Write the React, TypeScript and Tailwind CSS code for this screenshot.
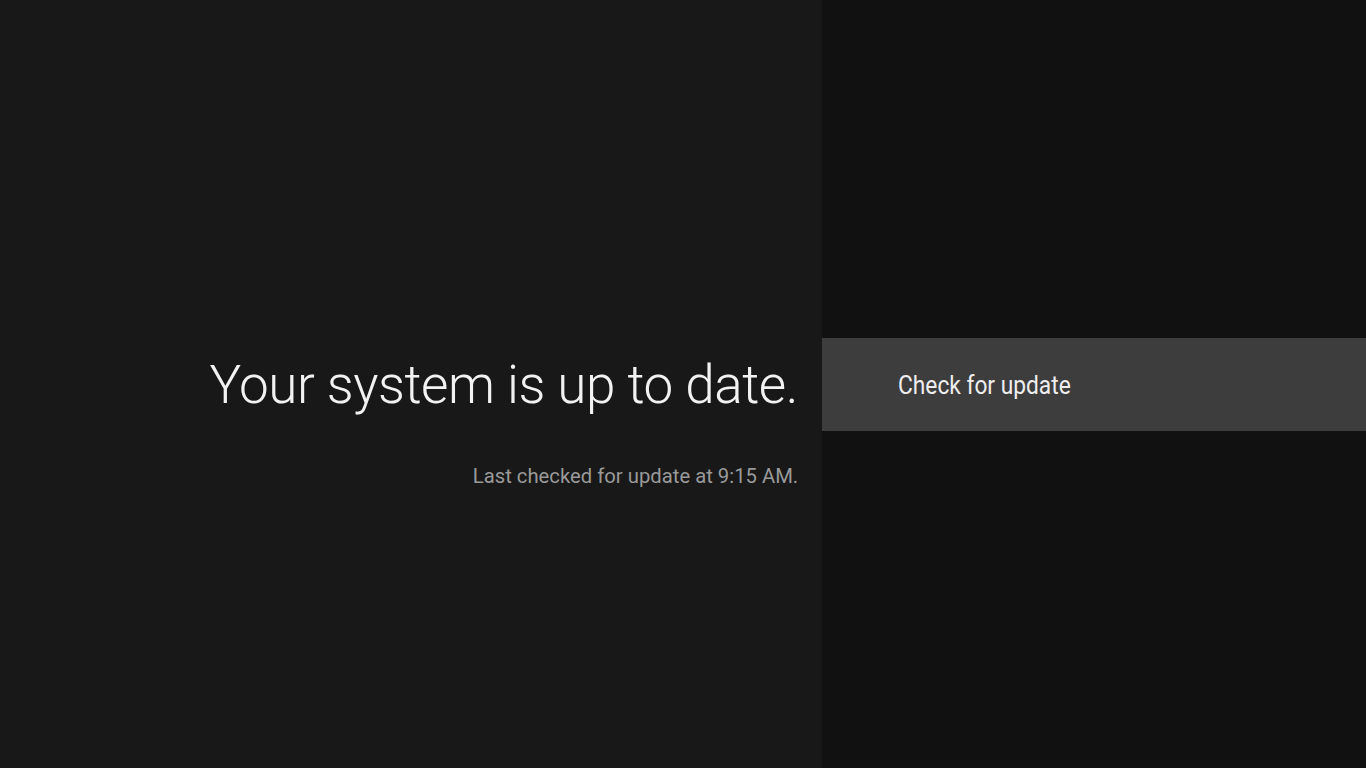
export default function App() {
  return (
    <div
      className="flex h-[768px] w-[1366px] overflow-hidden"
      style={{ fontFamily: 'Roboto, "Noto Sans", sans-serif' }}
    >
      {/* Left: status */}
      <div className="flex w-[822px] flex-col items-end bg-[#181818] pr-[24px] pt-[350px]">
        <h1 className="text-[53px] font-light leading-[70px] tracking-[-0.45px] text-[#f2f2f2]">
          Your system is up to date.
        </h1>
        <p className="mt-[42px] origin-right scale-x-[0.965] text-[21px] leading-[28px] text-[#9a9a9a]">
          Last checked for update at 9:15 AM.
        </p>
      </div>

      {/* Right: actions */}
      <div className="flex flex-1 flex-col justify-center bg-[#111111]">
        <div className="flex h-[93px] items-center bg-[#3d3d3d] pl-[76px] pt-[4px]">
          <span className="inline-block origin-left scale-x-[0.91] text-[25px] text-[#eeeeee]">
            Check for update
          </span>
        </div>
      </div>
    </div>
  );
}
